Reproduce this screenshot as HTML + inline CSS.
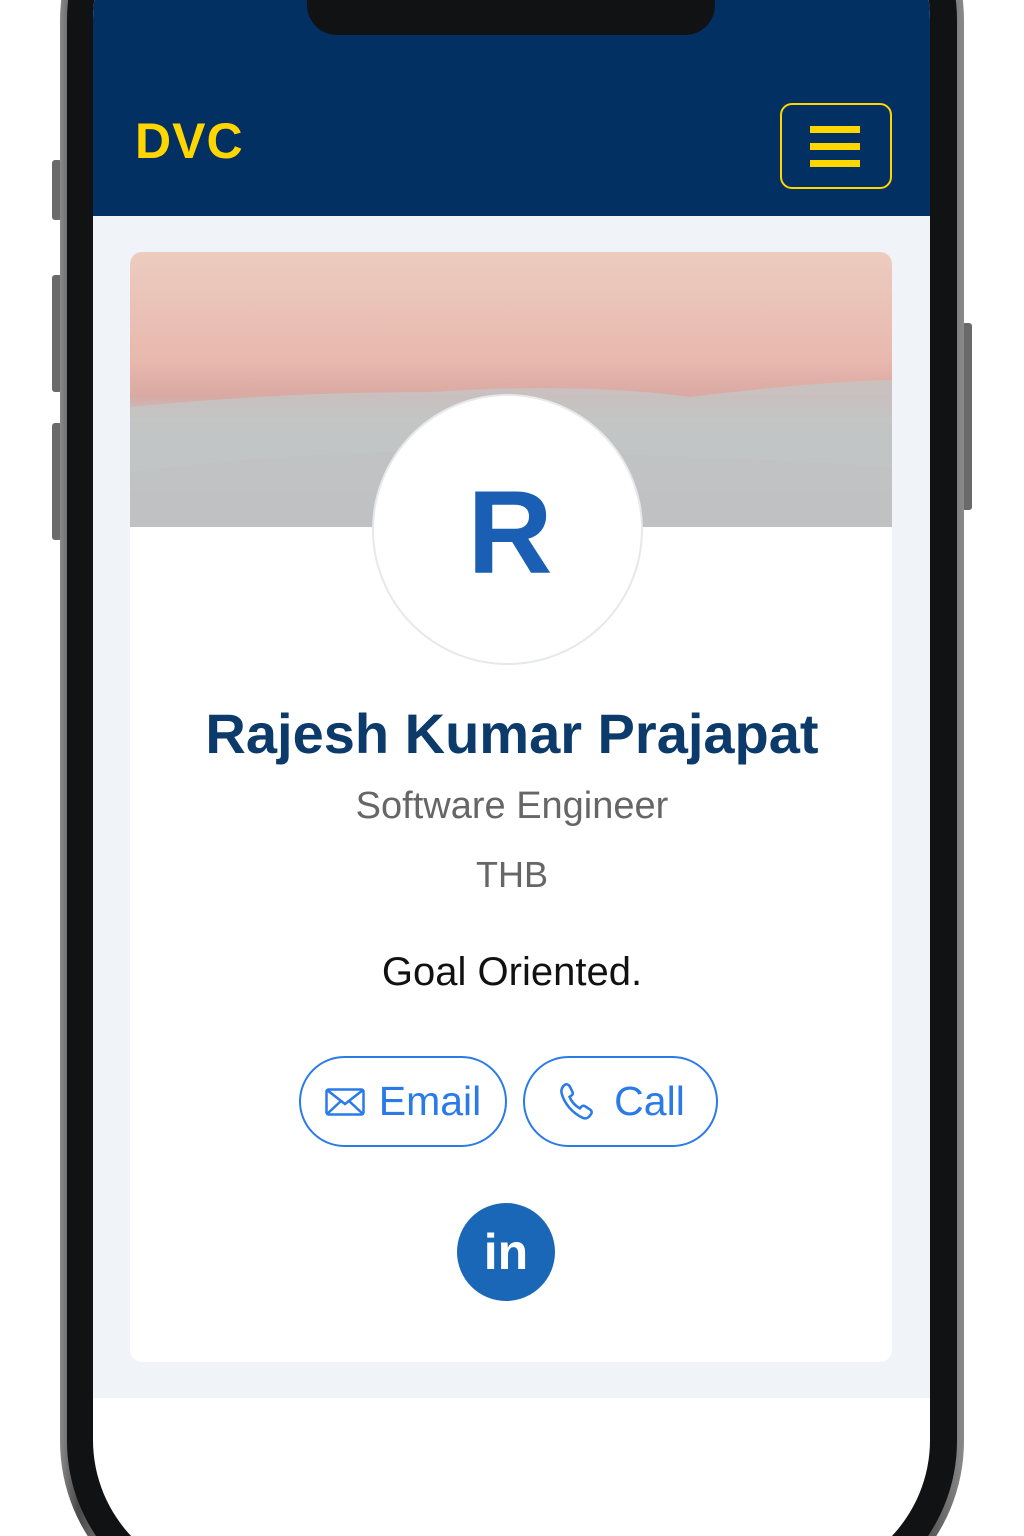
<!DOCTYPE html>
<html style="overflow:hidden;height:1536px"><head><meta charset="utf-8"><style>
*{margin:0;padding:0;box-sizing:border-box}
html,body{width:1024px;height:1536px;overflow:hidden}
body{background:#fff;position:relative;font-family:"Liberation Sans",sans-serif}
.wrap{position:absolute;left:0;top:0;width:1024px;height:1536px;overflow:hidden}
.btn{position:absolute;background:#6a6a6a;border-radius:3px}
.outer{position:absolute;left:60px;top:-150px;width:904px;height:1768px;border-radius:170px 170px 177px 177px;background:linear-gradient(90deg,#8a8a8a,#4a4a4a 2%,#6a6a6a 4%,#555 96%,#8a8a8a);}
.bez{position:absolute;left:7px;top:7px;right:7px;bottom:7px;border-radius:163px 163px 170px 170px;background:#111214}
.screen{position:absolute;left:93px;top:-130px;width:837px;height:1710px;border-radius:150px 150px 140px 140px;background:#fff;overflow:hidden}
.hdr{position:absolute;left:0;top:0;width:837px;height:346px;background:#033063}
.content{position:absolute;left:0;top:346px;width:837px;height:1182px;background:#f0f4f8}
.notch{position:absolute;left:307px;top:-20px;width:408px;height:55px;background:#111214;border-radius:0 0 30px 30px}
.card{position:absolute;left:130px;top:252px;width:762px;height:1110px;background:#fff;border-radius:12px;overflow:hidden}
.banner{position:absolute;left:0;top:0;width:762px;height:275px;background:linear-gradient(180deg,#ecccbf 0%,#e8b8ae 40%,#d9a9a3 52%,#bfc3c3 62%,#b3c0c0 85%,#bcbcbe 100%)}
.c{position:absolute;left:0;width:1024px;text-align:center}
.pill{position:absolute;top:1056px;height:91px;border:2.5px solid #2a7ae8;border-radius:46px;color:#2a7ae8;font-size:41px;display:flex;align-items:center;justify-content:center;gap:14px}
</style></head><body><div class="wrap">
<div class="btn" style="left:52px;top:160px;width:10px;height:60px"></div>
<div class="btn" style="left:52px;top:275px;width:10px;height:117px"></div>
<div class="btn" style="left:52px;top:423px;width:10px;height:117px"></div>
<div class="btn" style="left:962px;top:323px;width:10px;height:187px"></div>
<div class="outer"><div class="bez"></div></div>
<div class="screen">
 <div class="hdr"></div>
 <div class="content"></div>
</div>
<div class="notch"></div>
<div style="position:absolute;left:135px;top:112px;color:#ffd600;font-weight:bold;font-size:50px;letter-spacing:1px">DVC</div>
<div style="position:absolute;left:780px;top:103px;width:112px;height:86px;border:2.5px solid #ffd600;border-radius:12px"></div>
<div style="position:absolute;left:810px;top:126px;width:50px;height:7px;background:#ffd600"></div>
<div style="position:absolute;left:810px;top:143px;width:50px;height:7px;background:#ffd600"></div>
<div style="position:absolute;left:810px;top:160px;width:50px;height:7px;background:#ffd600"></div>
<div class="card">
 <div class="banner">
  <svg width="762" height="275" style="position:absolute;left:0;top:0">
   <path d="M0 155 Q150 140 300 140 Q450 130 560 145 Q680 130 762 128 L762 275 L0 275Z" fill="#c4c6c6" opacity=".8"/>
   <path d="M0 220 Q200 195 400 200 Q600 205 762 215 L762 275 L0 275Z" fill="#bfc0c2" opacity=".8"/>
  </svg>
 </div>
</div>
<div style="position:absolute;left:372px;top:394px;width:271px;height:271px;border-radius:50%;background:#fff;border:2px solid #e6e8ea"></div>
<div class="c" style="top:468px;left:-2px;font-size:118px;font-weight:bold;color:#1a5fb4;line-height:130px">R</div>
<div class="c" style="top:699px;font-size:56px;font-weight:bold;color:#0b3a6b;line-height:70px">Rajesh Kumar Prajapat</div>
<div class="c" style="top:784px;font-size:38px;color:#666;line-height:44px">Software Engineer</div>
<div class="c" style="top:854px;font-size:36px;color:#666;line-height:42px">THB</div>
<div class="c" style="top:948px;font-size:40px;color:#111;line-height:48px">Goal Oriented.</div>
<div class="pill" style="left:299px;width:208px">
 <svg width="40" height="28" viewBox="0 0 40 28"><rect x="1.5" y="1.5" width="37" height="25" rx="2" fill="none" stroke="#2a7ae8" stroke-width="2.5"/><path d="M2 2 L20 16 L38 2 M2 26 L16 13 M38 26 L24 13" fill="none" stroke="#2a7ae8" stroke-width="2.5"/></svg>
 <span>Email</span></div>
<div class="pill" style="left:523px;width:195px">
 <svg width="44" height="44" viewBox="0 0 24 24"><path d="M5 2.5c1-.5 2 .2 2.5 1l1.5 3c.4.8 0 1.6-.6 2l-1 .7c1 2.5 3 4.8 5.6 6.3l.8-.9c.6-.6 1.5-.7 2.2-.2l2.7 1.8c.8.5 1 1.6.4 2.4l-1 1.3c-.8 1-2.2 1.3-3.4.8C9 18 4.5 13 3 7c-.3-1.5.3-3.5 2-4.5z" fill="none" stroke="#2a7ae8" stroke-width="1.4"/></svg>
 <span>Call</span></div>
<div style="position:absolute;left:457px;top:1203px;width:98px;height:98px;border-radius:50%;background:#1a67b8;color:#fff;font-weight:bold;font-size:50px;text-align:center;line-height:98px">in</div>
</div></body></html>
